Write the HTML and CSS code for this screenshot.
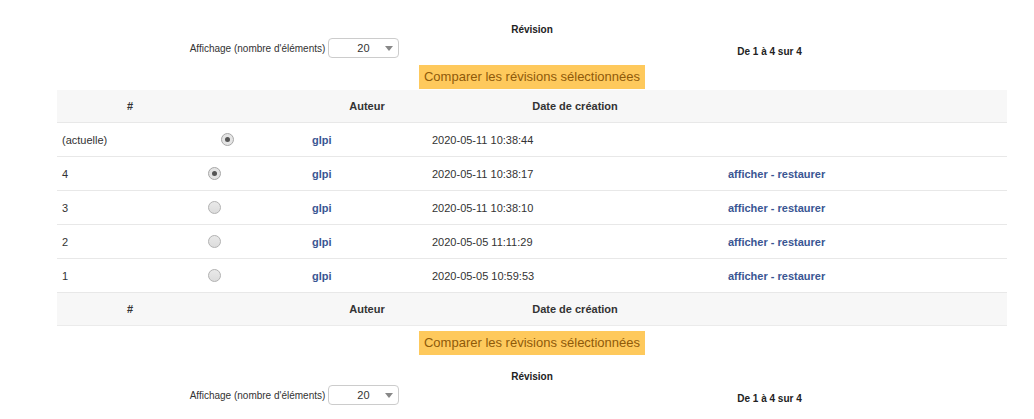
FILE: index.html
```html
<!DOCTYPE html>
<html lang="fr">
<head>
<meta charset="utf-8">
<title>Révisions</title>
<link rel="stylesheet" href="styles.css">
</head>
<body>
<div class="page">
  <div class="pager pager-top">
    <div class="pager-title">Révision</div>
    <div class="pager-row">
      <div class="pager-cell">
        <span class="pager-label">Affichage (nombre d'éléments)</span>
        <span class="select"><span class="select-value">20</span><span class="select-arrow"></span></span>
      </div>
      <div class="pager-cell pager-count">De 1 à 4 sur 4</div>
    </div>
  </div>
  <div class="compare compare-top"><span class="btn">Comparer les révisions sélectionnées</span></div>

  <table class="revisions">
    <colgroup>
      <col class="c-num"><col class="c-radio"><col class="c-author"><col class="c-date"><col class="c-actions">
    </colgroup>
    <thead>
      <tr><th>#</th><th></th><th>Auteur</th><th>Date de création</th><th></th></tr>
    </thead>
    <tbody>
      <tr>
        <td>(actuelle)</td>
        <td class="radios"><span class="radio hidden"></span><span class="radio checked"></span></td>
        <td><a class="link">glpi</a></td>
        <td>2020-05-11 10:38:44</td>
        <td></td>
      </tr>
      <tr>
        <td>4</td>
        <td class="radios"><span class="radio checked"></span><span class="radio hidden"></span></td>
        <td><a class="link">glpi</a></td>
        <td>2020-05-11 10:38:17</td>
        <td><a class="link">afficher</a> <span class="link">-</span> <a class="link">restaurer</a></td>
      </tr>
      <tr>
        <td>3</td>
        <td class="radios"><span class="radio"></span><span class="radio hidden"></span></td>
        <td><a class="link">glpi</a></td>
        <td>2020-05-11 10:38:10</td>
        <td><a class="link">afficher</a> <span class="link">-</span> <a class="link">restaurer</a></td>
      </tr>
      <tr>
        <td>2</td>
        <td class="radios"><span class="radio"></span><span class="radio hidden"></span></td>
        <td><a class="link">glpi</a></td>
        <td>2020-05-05 11:11:29</td>
        <td><a class="link">afficher</a> <span class="link">-</span> <a class="link">restaurer</a></td>
      </tr>
      <tr>
        <td>1</td>
        <td class="radios"><span class="radio"></span><span class="radio hidden"></span></td>
        <td><a class="link">glpi</a></td>
        <td>2020-05-05 10:59:53</td>
        <td><a class="link">afficher</a> <span class="link">-</span> <a class="link">restaurer</a></td>
      </tr>
    </tbody>
    <tfoot>
      <tr><th>#</th><th></th><th>Auteur</th><th>Date de création</th><th></th></tr>
    </tfoot>
  </table>

  <div class="compare compare-bottom"><span class="btn">Comparer les révisions sélectionnées</span></div>
  <div class="pager pager-bottom">
    <div class="pager-title">Révision</div>
    <div class="pager-row">
      <div class="pager-cell">
        <span class="pager-label">Affichage (nombre d'éléments)</span>
        <span class="select"><span class="select-value">20</span><span class="select-arrow"></span></span>
      </div>
      <div class="pager-cell pager-count">De 1 à 4 sur 4</div>
    </div>
  </div>
</div>
</body>
</html>
```

FILE: styles.css
```css
html, body {
  margin: 0;
  padding: 0;
  background: #ffffff;
}
body {
  font-family: "Liberation Sans", Arial, sans-serif;
  color: #333333;
}
.page {
  width: 950px;
  margin-left: 57px;
  display: flex;
  flex-direction: column;
}
.pager-top {
  padding-top: 24px;
}
.pager-title {
  font-size: 10px;
  font-weight: bold;
  line-height: 12px;
  text-align: center;
  color: #222;
}
.pager-row {
  display: grid;
  grid-template-columns: 1fr 1fr;
  margin-top: 2px;
}
.pager-cell {
  box-sizing: border-box;
  display: flex;
  justify-content: center;
  align-items: center;
  gap: 3px;
  height: 20px;
}
.pager-label {
  font-size: 10px;
  color: #333;
}
.pager-count {
  font-size: 10px;
  font-weight: bold;
  color: #222;
  padding-top: 7px;
}
.select {
  box-sizing: border-box;
  width: 71px;
  height: 20px;
  border: 1px solid #cccccc;
  border-radius: 4px;
  background: #fff;
  display: flex;
  align-items: center;
}
.select-value {
  font-size: 11px;
  color: #333;
  margin-left: 28px;
}
.select-arrow {
  width: 0;
  height: 0;
  border-left: 4px solid transparent;
  border-right: 4px solid transparent;
  border-top: 5px solid #888;
  margin-left: 15px;
}
.compare {
  display: flex;
  justify-content: center;
}
.compare-top {
  margin-top: 7px;
  margin-bottom: 1px;
}
.compare-bottom {
  margin-top: 5px;
}
.btn {
  background: #fec95c;
  color: #8f5a0a;
  font-size: 13px;
  line-height: 16px;
  padding: 4px 5px;
}
.revisions {
  width: 950px;
  border-collapse: collapse;
  table-layout: fixed;
  font-size: 11px;
}
.c-num { width: 146px; }
.c-radio { width: 104px; }
.c-author { width: 120px; }
.c-date { width: 296px; }
.c-actions { width: 284px; }
.revisions th {
  background: #f7f7f7;
  font-weight: bold;
  color: #333;
  height: 32px;
  padding: 0 5px;
  text-align: center;
}
.revisions thead th {
  border-bottom: 1px solid #e8e8e8;
}
.revisions td {
  height: 33px;
  padding: 0 5px;
  border-bottom: 1px solid #e8e8e8;
  text-align: left;
  vertical-align: middle;
}
.revisions tfoot th {
  border-bottom: 1px solid #ebebeb;
}
.radios {
  font-size: 0;
}
.radio {
  box-sizing: border-box;
  display: inline-block;
  width: 13px;
  height: 13px;
  border-radius: 50%;
  border: 1px solid #b3b3b3;
  background: linear-gradient(#e9e9e9, #dcdcdc);
  vertical-align: middle;
  position: relative;
}
.radio.checked {
  background: #e4e4e4;
  border-color: #a8a8a8;
}
.radio.checked::after {
  content: "";
  position: absolute;
  left: 3px;
  top: 3px;
  width: 5px;
  height: 5px;
  border-radius: 50%;
  background: #555;
}
.radio.hidden {
  visibility: hidden;
}
.link {
  color: #3a5693;
  font-weight: bold;
  text-decoration: none;
}
.pager-bottom {
  margin-top: 16px;
}
```
